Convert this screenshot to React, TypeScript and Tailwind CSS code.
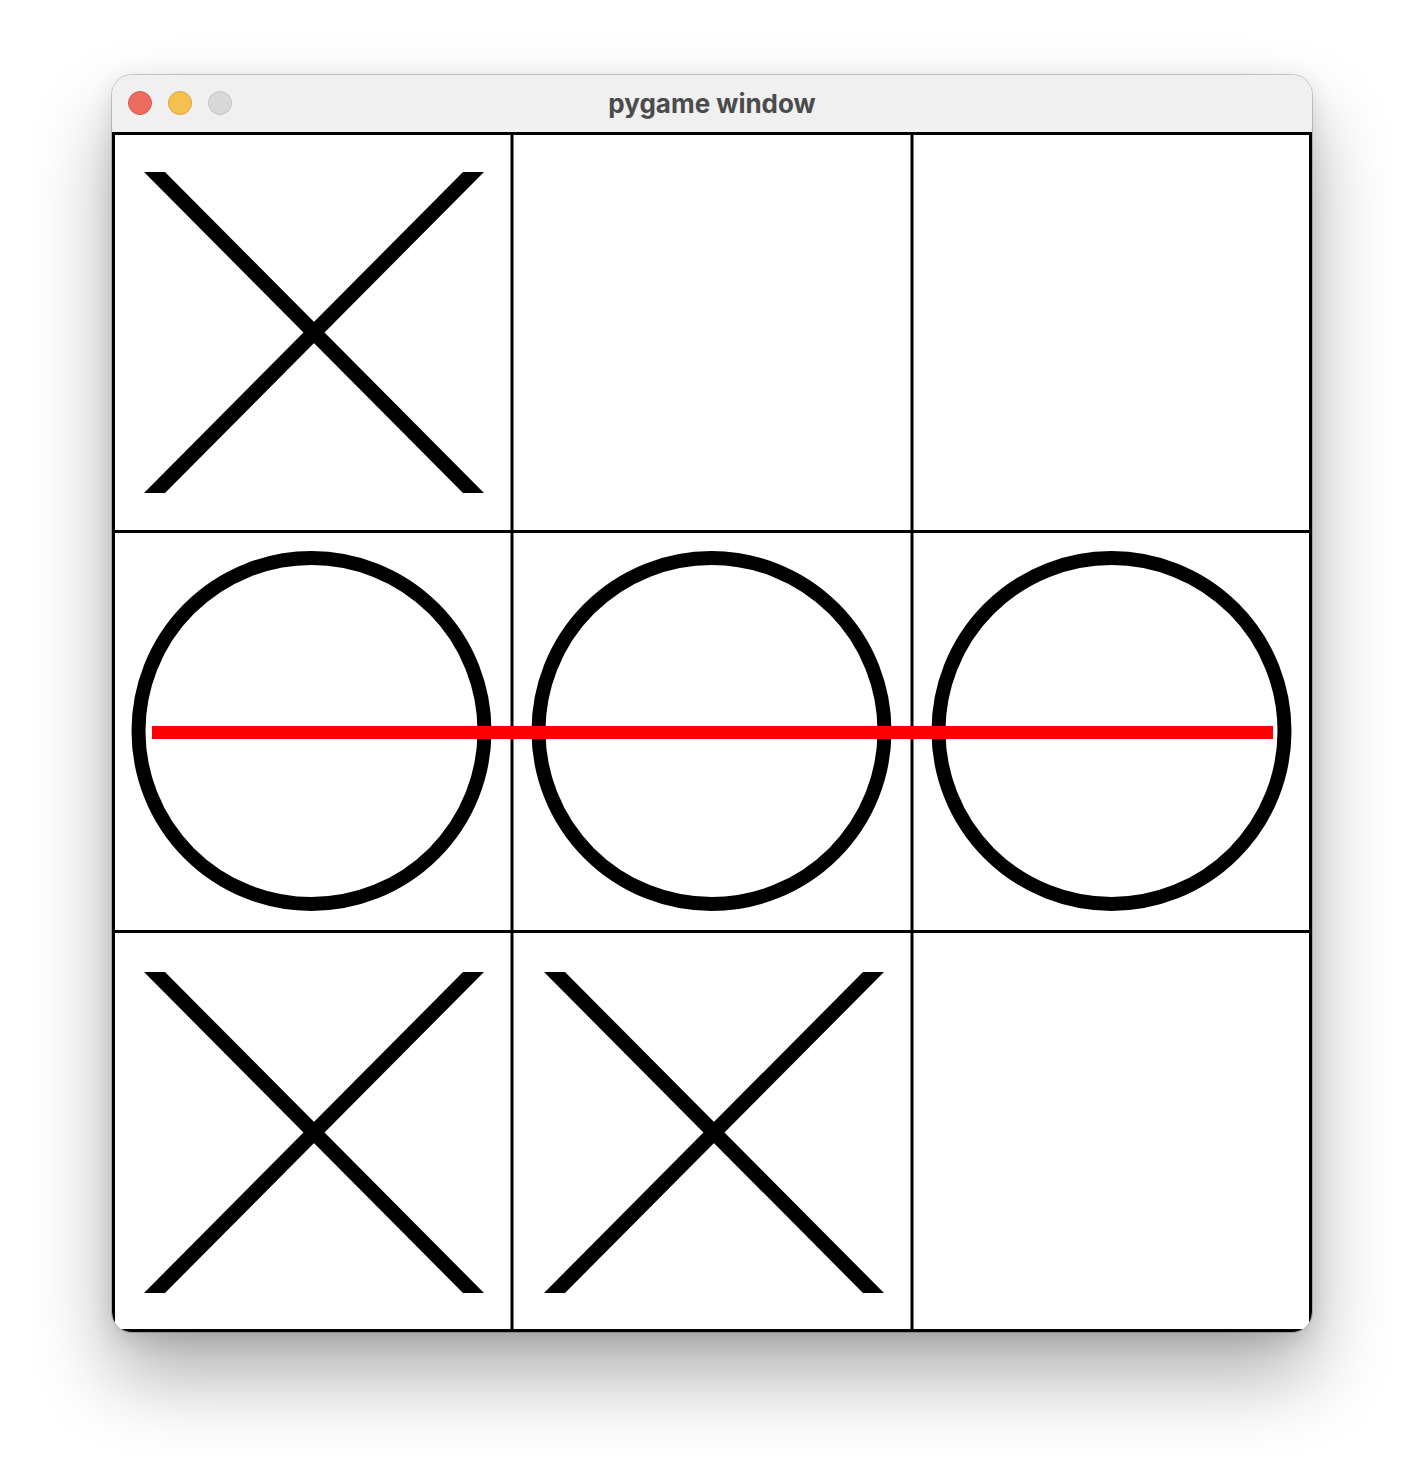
import React from "react";

const xs: [number, number][] = [
  [0, 0],
  [0, 2],
  [1, 2],
];
const os: [number, number][] = [
  [0, 1],
  [1, 1],
  [2, 1],
];

function XMark({ c, r }: { c: number; r: number }) {
  const ox = c * 400;
  const oy = r * 400;
  const p1 = `${ox + 32},${oy + 40} ${ox + 53},${oy + 40} ${ox + 372},${oy + 361} ${ox + 351},${oy + 361}`;
  const p2 = `${ox + 351},${oy + 40} ${ox + 372},${oy + 40} ${ox + 53},${oy + 361} ${ox + 32},${oy + 361}`;
  return (
    <g fill="#000">
      <polygon points={p1} />
      <polygon points={p2} />
    </g>
  );
}

export default function App() {
  return (
    <div className="w-[1424px] h-[1480px] bg-white flex justify-center pt-[75px]">
      <div className="w-[1200px] h-[1257px] rounded-[20px] overflow-hidden bg-[#f0f0f0] flex flex-col shadow-[0_0_0_1px_rgba(0,0,0,0.18),0_6px_24px_rgba(0,0,0,0.12),0_44px_80px_rgba(0,0,0,0.32)]">
        <div className="h-[57px] shrink-0 relative flex items-center justify-center bg-[#f0f0f0]">
          <div className="absolute left-[16px] top-[16px] flex gap-[16px]">
            <div className="w-[24px] h-[24px] rounded-full bg-[#ee6b5f] border border-[#d4594d]" />
            <div className="w-[24px] h-[24px] rounded-full bg-[#f6c04f] border border-[#d9a33f]" />
            <div className="w-[24px] h-[24px] rounded-full bg-[#d8d8d8] border border-[#c2c2c2]" />
          </div>
          <span
            className="text-[26px] font-bold text-[#4b4b4b] leading-none"
            style={{ fontFamily: "Inter, 'Noto Sans', sans-serif" }}
          >
            pygame window
          </span>
        </div>
        <div className="w-[1200px] h-[1200px] bg-white">
          <svg width="1200" height="1200" viewBox="0 0 1200 1200" className="block">
            <rect x="0" y="0" width="1200" height="1200" fill="#fff" />
            <rect x="1.5" y="1.5" width="1197" height="1197" fill="none" stroke="#000" strokeWidth="3" />
            <rect x="398.5" y="0" width="3" height="1200" fill="#000" />
            <rect x="798.5" y="0" width="3" height="1200" fill="#000" />
            <rect x="0" y="398" width="1200" height="3" fill="#000" />
            <rect x="0" y="798" width="1200" height="3" fill="#000" />
            {xs.map(([c, r]) => (
              <XMark key={`x${c}${r}`} c={c} r={r} />
            ))}
            {os.map(([c, r]) => (
              <circle
                key={`o${c}${r}`}
                cx={c * 400 + 199.5}
                cy={r * 400 + 199}
                r="173"
                fill="none"
                stroke="#000"
                strokeWidth="14"
              />
            ))}
            <rect x="40" y="594" width="1121" height="13" fill="#ff0000" />
          </svg>
        </div>
      </div>
    </div>
  );
}
